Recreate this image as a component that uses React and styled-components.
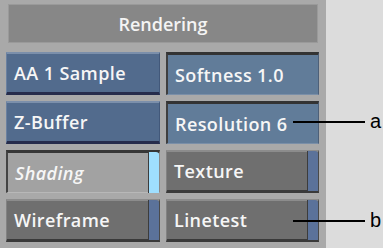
import styled, { createGlobalStyle, css } from "styled-components";

const GlobalStyle = createGlobalStyle`
  html, body {
    margin: 0;
    padding: 0;
    background: #dcdcdc;
  }
  body {
    font-family: "Open Sans", "DejaVu Sans", sans-serif;
  }
`;

const Page = styled.div`
  position: relative;
  display: flex;
  width: 383px;
  height: 248px;
  background: #dcdcdc;
`;

const Panel = styled.div`
  width: 326px;
  height: 248px;
  box-sizing: border-box;
  padding: 4px 7px 0 6px;
  background: #a9a9a9;
  display: flex;
  flex-direction: column;
`;

const Header = styled.div`
  height: 39px;
  margin: 0 1px 0 2px;
  box-sizing: border-box;
  background: #878787;
  border: 1px solid #9a9a9a;
  display: flex;
  align-items: center;
  justify-content: center;
  color: #f4f4f4;
  font-size: 18px;
  font-weight: 600;
`;

const Grid = styled.div`
  margin-top: 9px;
  display: grid;
  grid-template-columns: 154px 153px;
  grid-auto-rows: 43px;
  column-gap: 6px;
  row-gap: 6px;
`;

const looks = {
  blue: css`
    background: #526b8d;
    border-top: 2px solid #7b8fab;
    border-left: 1px solid #6a80a0;
    border-right: 1px solid #42587a;
    border-bottom: 3px solid #262c4c;
  `,
  blueIn: css`
    background: #617c99;
    border-top: 3px solid #333333;
    border-left: 2px solid #3f3f3f;
    border-right: 1px solid #4e6078;
    border-bottom: 1px solid #7a8fa8;
  `,
  grayIn: css`
    background: #a2a2a2;
    border-top: 3px solid #363636;
    border-left: 2px solid #444444;
    border-right: 1px solid #8a8a8a;
    border-bottom: 1px solid #b8b8b8;
  `,
  gray: css`
    background: #6f6f6f;
    border-top: 2px solid #8c8c8c;
    border-left: 1px solid #828282;
    border-right: 1px solid #4a4a4a;
    border-bottom: 3px solid #3a3a3a;
  `,
};

const Button = styled.div`
  position: relative;
  box-sizing: border-box;
  display: flex;
  align-items: center;
  padding-left: 7px;
  color: #f6f6f6;
  font-size: 18px;
  font-weight: 600;
  letter-spacing: 0.4px;
  font-style: ${(p) => (p.$italic ? "italic" : "normal")};
  ${(p) => looks[p.$look]}
`;

const Indicator = styled.span`
  position: absolute;
  top: -1px;
  right: 0;
  bottom: -1px;
  width: 11px;
  box-sizing: border-box;
  border-left: 1px solid #3c3c3c;
  border-top-right-radius: 3px;
  background: ${(p) => (p.$on ? "#9fdfff" : "#5b729a")};
`;

const Callout = styled.div`
  position: absolute;
  left: 293px;
  top: ${(p) => p.$y}px;
  width: 88px;
  display: flex;
  align-items: center;
  gap: 5px;
  font-family: "Liberation Sans", Arial, sans-serif;
  font-size: 20px;
  line-height: 23px;
  color: #000;
  &::before {
    content: "";
    flex: 1;
    height: 2px;
    background: #000;
  }
`;

const buttons = [
  { label: "AA 1 Sample", look: "blue" },
  { label: "Softness 1.0", look: "blueIn" },
  { label: "Z-Buffer", look: "blue" },
  { label: "Resolution 6", look: "blueIn" },
  { label: "Shading", look: "grayIn", italic: true, indicator: "on" },
  { label: "Texture", look: "gray", indicator: "off" },
  { label: "Wireframe", look: "gray", indicator: "off" },
  { label: "Linetest", look: "gray", indicator: "off" },
];

export default function App() {
  return (
    <>
      <GlobalStyle />
      <Page>
        <Panel>
          <Header>Rendering</Header>
          <Grid>
            {buttons.map((b) => (
              <Button key={b.label} $look={b.look} $italic={b.italic}>
                {b.label}
                {b.indicator && <Indicator $on={b.indicator === "on"} />}
              </Button>
            ))}
          </Grid>
        </Panel>
        <Callout $y={110}>a</Callout>
        <Callout $y={209}>b</Callout>
      </Page>
    </>
  );
}
